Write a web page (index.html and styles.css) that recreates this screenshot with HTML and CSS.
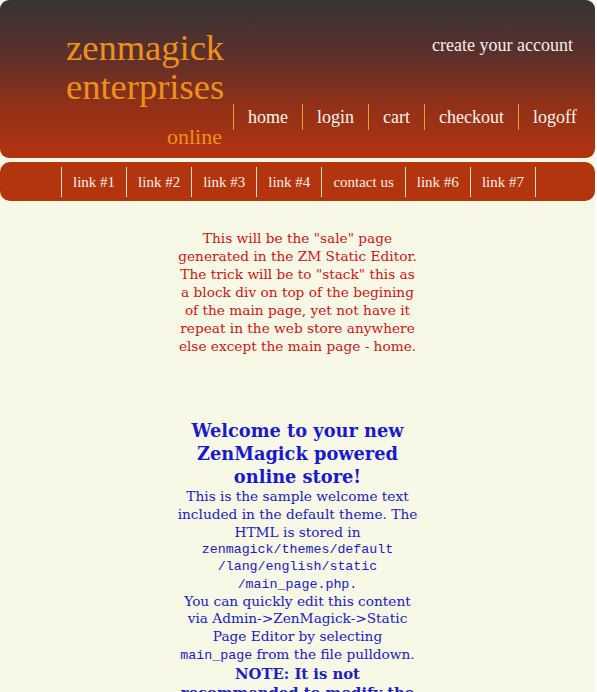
FILE: index.html
```html
<!DOCTYPE html>
<html lang="en">
<head>
<meta charset="utf-8">
<title>zenmagick enterprises online</title>
<link rel="stylesheet" href="styles.css">
</head>
<body>
<div class="page">
  <header class="masthead">
    <div class="brand">
      <div class="brand-name">zenmagick<br>enterprises</div>
      <div class="brand-tag">online</div>
    </div>
    <div class="masthead-right">
      <a class="account-link" href="#">create your account</a>
      <nav class="main-nav">
        <a href="#">home</a>
        <a href="#">login</a>
        <a href="#">cart</a>
        <a href="#">checkout</a>
        <a href="#">logoff</a>
      </nav>
    </div>
  </header>
  <nav class="sub-nav">
    <a href="#">link #1</a>
    <a href="#">link #2</a>
    <a href="#">link #3</a>
    <a href="#">link #4</a>
    <a href="#">contact us</a>
    <a href="#">link #6</a>
    <a href="#">link #7</a>
  </nav>
  <main class="content">
    <p class="sale">This will be the "sale" page<br>generated in the ZM Static Editor.<br>The trick will be to "stack" this as<br>a block div on top of the begining<br>of the main page, yet not have it<br>repeat in the web store anywhere<br>else except the main page - home.</p>
    <div class="welcome">
      <h1>Welcome to your new<br>ZenMagick powered<br>online store!</h1>
      <p class="intro">This is the sample welcome text<br>included in the default theme. The<br>HTML is stored in</p>
      <p class="path"><code>zenmagick/themes/default</code><code>/lang/english/static</code><code>/main_page.php.</code></p>
      <p class="howto">You can quickly edit this content<br>via Admin-&gt;ZenMagick-&gt;Static<br>Page Editor by selecting<br><code>main_page</code> from the file pulldown.</p>
      <p class="note">NOTE: It is not<br>recommended to modify the</p>
    </div>
  </main>
</div>
</body>
</html>
```
FILE: styles.css
```css
html, body {
  margin: 0;
  padding: 0;
  background: #ffffff;
}

.page {
  width: 595px;
  min-height: 692px;
  background: #f8f8e6;
  font-family: "DejaVu Serif", serif;
}

a {
  text-decoration: none;
  color: inherit;
}

/* ---------- masthead ---------- */
.masthead {
  display: flex;
  height: 158px;
  border-radius: 9px;
  background: linear-gradient(to bottom, #353535 0%, #5c302b 35%, #8e3119 65%, #b3330e 100%);
  font-family: "Liberation Serif", serif;
}

.brand {
  width: 167px;
  padding: 28px 0 0 66px;
  display: flex;
  flex-direction: column;
}

.brand-name {
  font-size: 36.5px;
  line-height: 39px;
  color: #f0901c;
  white-space: nowrap;
}

.brand-tag {
  align-self: flex-end;
  margin: 18px 11px 0 0;
  font-size: 22px;
  line-height: 26px;
  color: #f0901c;
}

.masthead-right {
  flex: 1;
  display: flex;
  flex-direction: column;
  align-items: flex-end;
  padding-top: 35px;
}

.account-link {
  margin-right: 22px;
  font-size: 18px;
  line-height: 20px;
  color: #f6f0ea;
  white-space: nowrap;
}

.main-nav {
  align-self: flex-start;
  display: flex;
  margin-top: 49px;
}

.main-nav a {
  padding: 0 14px;
  border-left: 1px solid #dca532;
  font-size: 18px;
  line-height: 26px;
  color: #fbf4ee;
  white-space: nowrap;
}

/* ---------- sub nav ---------- */
.sub-nav {
  display: flex;
  align-items: center;
  margin-top: 4px;
  height: 39px;
  padding-left: 61px;
  border-radius: 10px;
  background: #b2350e;
  font-family: "Liberation Serif", serif;
}

.sub-nav a {
  padding: 1px 11px 0;
  border-left: 1px solid #efdccb;
  font-size: 15px;
  line-height: 29px;
  color: #fbf0e8;
  white-space: nowrap;
}

.sub-nav a:last-child {
  border-right: 1px solid #efdccb;
}

/* ---------- content ---------- */
.content {
  width: 320px;
  margin: 0 auto;
  text-align: center;
  font-size: 13.7px;
  line-height: 18px;
}

.sale {
  margin: 28px 0 0;
  color: #cc1515;
}

.welcome {
  margin-top: 64px;
  color: #2020c0;
}

.welcome h1 {
  margin: 0;
  font-size: 17.8px;
  line-height: 23px;
  font-weight: bold;
  color: #1a1acc;
}

.welcome p {
  margin: 0;
}

.welcome .intro {
  margin-top: -1px;
}

code {
  font-family: "Liberation Mono", monospace;
  font-size: 13.3px;
}

.welcome .path code {
  display: block;
  line-height: 17.3px;
}

.welcome .howto {
  line-height: 17.6px;
}

.welcome .note {
  font-weight: bold;
  font-size: 14.8px;
  line-height: 19px;
}
```
